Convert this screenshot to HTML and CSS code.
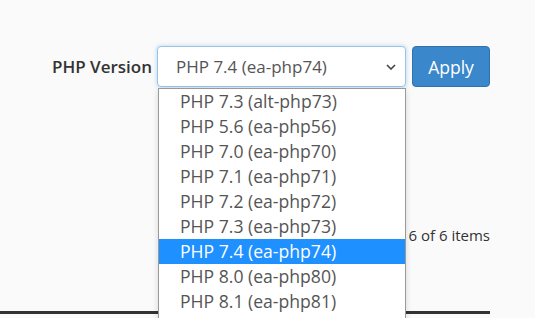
FILE: index.html
```html
<!DOCTYPE html>
<html>
<head>
<meta charset="utf-8">
<link rel="stylesheet" href="styles.css">
</head>
<body>
<div class="page">
  <div class="form-row">
    <label class="label">PHP Version</label>
    <div class="select-wrap">
      <div class="select">
        <span class="select-value">PHP 7.4 (ea-php74)</span>
        <svg class="chev" width="10" height="6" viewBox="0 0 10 6"><path d="M1 1 L5 5 L9 1" fill="none" stroke="#444" stroke-width="1.6"/></svg>
      </div>
      <ul class="dropdown">
        <li>PHP 7.3 (alt-php73)</li>
        <li>PHP 5.6 (ea-php56)</li>
        <li>PHP 7.0 (ea-php70)</li>
        <li>PHP 7.1 (ea-php71)</li>
        <li>PHP 7.2 (ea-php72)</li>
        <li>PHP 7.3 (ea-php73)</li>
        <li class="active">PHP 7.4 (ea-php74)</li>
        <li>PHP 8.0 (ea-php80)</li>
        <li>PHP 8.1 (ea-php81)</li>
      </ul>
    </div>
    <button class="btn">Apply</button>
  </div>
  <div class="count">6 of 6 items</div>
  <div class="table-head"></div>
</div>
</body>
</html>
```

FILE: styles.css
```css
html, body {
  margin: 0;
  padding: 0;
  background: #fafafa;
  font-family: "Open Sans", "Liberation Sans", sans-serif;
  overflow: hidden;
  height: 318px;
}
.page {
  width: 490px;
  padding-top: 46px;
}
.form-row {
  display: flex;
  justify-content: flex-end;
  align-items: center;
  height: 41px;
}
.label {
  font-size: 17px;
  font-weight: 600;
  color: #333;
  margin-right: 5px;
}
.select-wrap {
  position: relative;
  margin-right: 6px;
}
.select {
  box-sizing: border-box;
  width: 249px;
  height: 41px;
  border: 1px solid #9cc3e6;
  border-radius: 4px;
  background: #fff;
  box-shadow: 0 0 4px rgba(102, 175, 233, 0.5);
  display: flex;
  align-items: center;
  padding-left: 18px;
  padding-right: 9px;
}
.select-value {
  flex: 1;
  font-size: 17px;
  color: #555;
}
.chev {
  display: block;
}
.dropdown {
  position: absolute;
  top: 42px;
  left: 1px;
  width: 248px;
  box-sizing: border-box;
  margin: 0;
  padding: 0 0 20px 0;
  list-style: none;
  background: #fff;
  border: 1px solid #9a9a9a;
  box-shadow: 0 2px 6px rgba(0, 0, 0, 0.15);
}
.dropdown li {
  height: 25px;
  line-height: 25px;
  padding-left: 21px;
  font-size: 17.6px;
  color: #555;
}
.dropdown li.active {
  background: #1e90ff;
  color: #fff;
}
.btn {
  box-sizing: border-box;
  width: 78px;
  height: 41px;
  background: #3a87cb;
  border: 1px solid #2f72ad;
  border-radius: 4px;
  color: #fff;
  font-family: "Open Sans", "Liberation Sans", sans-serif;
  font-size: 17.5px;
  padding: 0;
}
.count {
  margin-top: 137px;
  text-align: right;
  font-size: 15px;
  color: #333;
  line-height: 22px;
}
.table-head {
  margin-top: 65px;
  height: 3px;
  background: #333;
}
```
